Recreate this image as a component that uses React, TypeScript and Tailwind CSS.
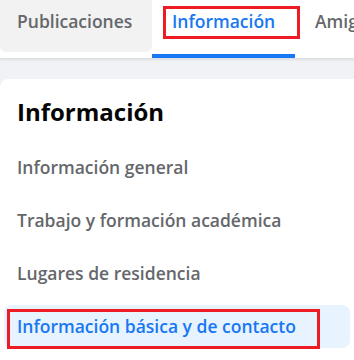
import React from 'react';

const font = { fontFamily: '"Open Sans", "Noto Sans", sans-serif' };

const items = [
  'Información general',
  'Trabajo y formación académica',
  'Lugares de residencia',
];

export default function App() {
  return (
    <div className="relative w-[354px] h-[360px] overflow-hidden bg-[#f0f2f5]" style={font}>
      {/* tabs */}
      <div className="relative h-[59px] bg-white border-b border-[#dddfe2] shadow-[0_1px_2px_rgba(0,0,0,0.08)] flex">
        <div className="shrink-0 w-[152px] h-[52px] bg-[#f2f2f2] rounded-b-md pt-[8px] pl-[17px] text-[17.5px] font-semibold text-[#65676b] whitespace-nowrap">
          Publicaciones
        </div>
        <div className="shrink-0 relative w-[143px] h-[58px] pt-[8px] pl-[20px] text-[17.5px] font-semibold text-[#1877f2] whitespace-nowrap">
          Información
          <div className="absolute left-0 right-0 bottom-0 h-[4px] bg-[#1877f2]" />
        </div>
        <div className="shrink-0 h-[52px] pt-[8px] pl-[20px] text-[17.5px] font-semibold text-[#65676b] whitespace-nowrap">
          Amigos
        </div>
        <div className="absolute left-[163px] top-[6px] w-[137px] h-[33px] border-[3px] border-[#ed1c24]" />
      </div>

      {/* card */}
      <div className="relative mt-[20px] bg-white rounded-tl-lg shadow-[0_1px_2px_rgba(0,0,0,0.1)] h-[300px]">
        <div className="h-[67px] pl-[17px] pt-[17px] text-[24px] font-bold text-[#050505] leading-[32px]">
          Información
        </div>
        <div className="flex flex-col gap-[10px] px-[4px]">
          {items.map((t) => (
            <div key={t} className="h-[43px] flex items-center pl-[13px] text-[17.5px] font-semibold text-[#65676b] whitespace-nowrap">
              {t}
            </div>
          ))}
          <div className="h-[43px] flex items-center pl-[13px] rounded-lg bg-[#e7f3ff] text-[17.5px] font-semibold text-[#1877f2] whitespace-nowrap">
            Información básica y de contacto
          </div>
        </div>
        <div className="absolute left-[7px] top-[230px] w-[313px] h-[40px] border-[3px] border-[#ed1c24]" />
      </div>
    </div>
  );
}
